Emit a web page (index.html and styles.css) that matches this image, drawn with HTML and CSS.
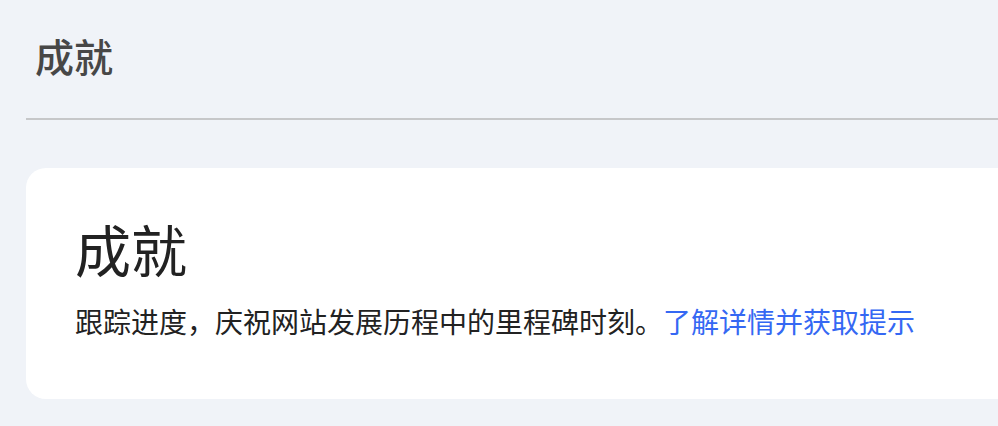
FILE: index.html
```html
<!DOCTYPE html>
<html lang="zh-CN">
<head>
<meta charset="utf-8">
<title>成就</title>
<link rel="stylesheet" href="styles.css">
</head>
<body>
<div class="page">
  <header class="topbar">
    <h1 class="topbar-title">成就</h1>
  </header>
  <section class="card">
    <h2 class="card-title">成就</h2>
    <p class="card-desc">跟踪进度，庆祝网站发展历程中的里程碑时刻。<a class="card-link" href="#">了解详情并获取提示</a></p>
  </section>
</div>
</body>
</html>
```
FILE: styles.css
```css
html, body {
  margin: 0;
  padding: 0;
}
body {
  background: #f0f3f8;
  font-family: "Noto Sans CJK SC", "Noto Sans", sans-serif;
  overflow: hidden;
  width: 998px;
  height: 426px;
}
.page {
  padding-left: 26px;
  margin-right: -60px;
}
.topbar {
  height: 118px;
  border-bottom: 2px solid #c6c7c9;
  display: flex;
  align-items: center;
  padding-left: 9px;
  box-sizing: content-box;
}
.topbar-title {
  margin: 0;
  font-size: 39px;
  line-height: 40px;
  font-weight: 500;
  color: #474747;
  position: relative;
  top: -4px;
}
.card {
  margin-top: 48px;
  background: #ffffff;
  border-radius: 20px;
  padding: 52px 0 56px 49px;
  height: 231px;
  box-sizing: border-box;
}
.card-title {
  margin: 0;
  font-size: 56px;
  line-height: 56px;
  font-weight: 400;
  color: #222222;
}
.card-desc {
  margin: 25px 0 0 0;
  font-size: 28px;
  line-height: 40px;
  color: #222222;
  white-space: nowrap;
}
.card-link {
  color: #3568f3;
  text-decoration: none;
}
```
